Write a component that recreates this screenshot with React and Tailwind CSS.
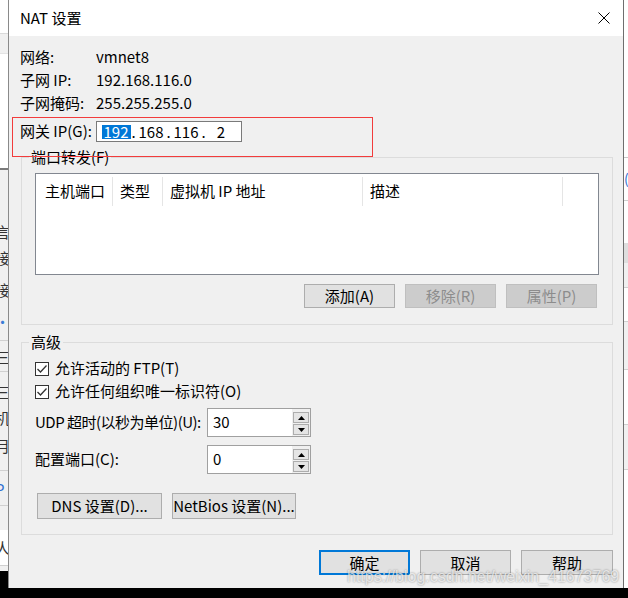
import React from "react";

const leftRows = [
  { h: 50 },
  { h: 24, ch: "言" },
  { h: 28, ch: "接" },
  { h: 36, ch: "接" },
  { h: 28, ch: "·", cls: "text-[#3a7bd5]" },
  { h: 5, line: true },
  { h: 31, ch: "三", line: true },
  { h: 40, ch: "三" },
  { h: 12, ch: "机" },
  { h: 44, ch: "月" },
  { h: 3, line: true },
  { h: 35, ch: "P", cls: "text-[#2f6fd0]", line: true },
  { h: 24 },
  { h: 36, ch: "人", cls: "bg-white", line: true },
];

function LeftStrip() {
  return (
    <div className="flex h-[571px] w-[8px] shrink-0 flex-col overflow-hidden bg-[#f0f0f0] text-[15px] text-[#333]">
      <div className="h-[33px] bg-white" />
      <div className="h-[20px] border-t border-[#dadada] bg-[#f0f0f0]" />
      <div className="h-[115px] border-t border-[#e3e3e3] bg-white" />
      <div className="h-[2px] bg-[#7a7a7a]" />
      {leftRows.map((r, i) => (
        <div
          key={i}
          className={`-ml-[5px] whitespace-nowrap ${r.line ? "border-b border-[#d0d0d0]" : ""} ${r.cls || ""}`}
          style={{ height: r.h, lineHeight: r.h + "px" }}
        >
          {r.ch || ""}
        </div>
      ))}
    </div>
  );
}

function RightStrip() {
  return (
    <div className="flex h-[588px] w-[4px] shrink-0 flex-col overflow-hidden bg-[#f0f0f0]">
      <div className="h-[157px] bg-white" />
      <div className="h-[43px] border-t border-[#c8c8c8] bg-white text-[14px] leading-[40px] text-[#2f6fd0]">(</div>
      <div className="h-[43px] border-t border-[#d0d0d0] bg-white" />
      <div className="h-[20px] bg-[#dedede]" />
      <div className="h-[25px] border-b border-[#d0d0d0]" />
      <div className="h-[34px] border-b border-[#d0d0d0] bg-white" />
      <div className="h-[48px] border-b border-[#d0d0d0]" />
      <div className="h-[55px] border-b border-[#d0d0d0] bg-white" />
      <div className="h-[45px] border-b border-[#d0d0d0]" />
      <div className="flex-1 bg-white" />
    </div>
  );
}

function WinButton({ children, className = "", disabled = false, primary = false }) {
  let tone = "border border-[#adadad] bg-[#e1e1e1] text-black";
  if (disabled) tone = "border border-[#bfbfbf] bg-[#cccccc] text-[#8c8c8c]";
  if (primary) tone = "border-2 border-[#0078d7] bg-[#e1e1e1] text-black";
  return (
    <div className={`flex items-center justify-center leading-[18px] ${tone} ${className}`}>
      {children}
    </div>
  );
}

function CheckBox() {
  return (
    <svg width="14" height="14" viewBox="0 0 14 14" className="shrink-0">
      <rect x="0.5" y="0.5" width="13" height="13" fill="#fff" stroke="#333" />
      <polyline points="2.5,7 5.5,10 11.5,3.5" fill="none" stroke="#333" strokeWidth="1.3" />
    </svg>
  );
}

function SpinBox({ value }) {
  return (
    <div className="flex h-[29px] w-[104px] border border-[#a0a0a0] bg-white">
      <div className="flex-1 pl-[5px] pt-[4px] leading-[18px]">{value}</div>
      <div className="flex w-[18px] flex-col gap-[1px] bg-[#f0f0f0] px-[1px] pt-[3px]">
        <div className="flex h-[11px] items-center justify-center border border-[#adadad] bg-[#e5e5e5]">
          <svg width="7" height="4" viewBox="0 0 7 4">
            <polygon points="3.5,0 7,4 0,4" fill="#000" />
          </svg>
        </div>
        <div className="flex h-[11px] items-center justify-center border border-[#adadad] bg-[#e5e5e5]">
          <svg width="7" height="4" viewBox="0 0 7 4">
            <polygon points="0,0 7,0 3.5,4" fill="#000" />
          </svg>
        </div>
      </div>
    </div>
  );
}

function InfoRow({ label, value }) {
  return (
    <div className="flex h-[23px] items-center">
      <span className="-ml-px w-[76px]">{label}</span>
      <span>{value}</span>
    </div>
  );
}

function Dialog() {
  const cols = [
    { w: "w-[77px] pl-[9px]", t: "主机端口" },
    { w: "w-[50px] pl-[7px]", t: "类型" },
    { w: "w-[200px] pl-[7px]", t: "虚拟机 IP 地址" },
    { w: "w-[200px] pl-[7px]", t: "描述" },
  ];

  return (
    <div className="flex h-[588px] w-[616px] shrink-0 flex-col border-x border-l-[#8a8a8a] border-r-[#6e6e6e] bg-[#f0f0f0]">
      {/* 标题栏 */}
      <div className="flex h-[36px] items-center justify-between bg-white pl-[11px] pr-[13px]">
        <span className="leading-[20px]">NAT 设置</span>
        <svg width="12" height="12" viewBox="0 0 12 12">
          <path d="M0.5 0.5 L11.5 11.5 M11.5 0.5 L0.5 11.5" stroke="#000" strokeWidth="1" />
        </svg>
      </div>

      <div className="flex flex-1 flex-col pl-[12px] pr-[10px] pt-[10px]">
        <InfoRow label="网络:" value="vmnet8" />
        <InfoRow label="子网 IP:" value="192.168.116.0" />
        <InfoRow label="子网掩码:" value="255.255.255.0" />

        <div className="mt-[6px] flex h-[21px] items-center">
          <span className="-ml-px w-[76px]">网关 IP(G):</span>
          <div className="flex h-[21px] w-[146px] items-center border border-[#7a7a7a] bg-white pl-[5px] leading-[14px]">
            <span className="flex w-[28px] justify-center">
              <span className="bg-[#0078d7] px-[2px] text-white">192</span>
            </span>
            <span className="w-[7px] text-center">.</span>
            <span className="w-[28px] text-center">168</span>
            <span className="w-[7px] text-center">.</span>
            <span className="w-[28px] text-center">116</span>
            <span className="w-[7px] text-center">.</span>
            <span className="w-[28px] text-center">2</span>
          </div>
        </div>

        {/* 端口转发 */}
        <fieldset className="mt-[6px] border border-[#dcdcdc] px-[13px] pb-[16px]">
          <legend className="-ml-[6px] px-[2px] leading-[18px]">端口转发(F)</legend>
          <div className="mt-[7px] h-[102px] border border-[#828790] bg-white">
            <div className="flex h-[32px] items-center pt-[3px]">
              {cols.map((c) => (
                <div key={c.t} className={`flex h-full items-center border-r border-[#e5e5e5] ${c.w}`}>
                  {c.t}
                </div>
              ))}
            </div>
          </div>
          <div className="mt-[9px] flex justify-end gap-[10px] pr-[2px]">
            <WinButton className="h-[24px] w-[91px]">添加(A)</WinButton>
            <WinButton className="h-[24px] w-[91px]" disabled>
              移除(R)
            </WinButton>
            <WinButton className="h-[24px] w-[91px]" disabled>
              属性(P)
            </WinButton>
          </div>
        </fieldset>

        {/* 高级 */}
        <fieldset className="mt-[8px] border border-[#dcdcdc] pb-[15px] pl-[13px]">
          <legend className="-ml-[6px] px-[2px] leading-[18px]">高级</legend>
          <div className="mt-[6px] flex h-[23px] items-center gap-[6px]">
            <CheckBox />
            <span>允许活动的 FTP(T)</span>
          </div>
          <div className="flex h-[23px] items-center gap-[6px]">
            <CheckBox />
            <span>允许任何组织唯一标识符(O)</span>
          </div>
          <div className="mt-[5px] flex h-[29px] items-center">
            <span className="w-[172px] whitespace-nowrap tracking-[-0.5px]">UDP 超时(以秒为单位)(U):</span>
            <SpinBox value="30" />
          </div>
          <div className="mt-[8px] flex h-[29px] items-center">
            <span className="w-[172px]">配置端口(C):</span>
            <SpinBox value="0" />
          </div>
          <div className="ml-[2px] mt-[19px] flex gap-[10px]">
            <WinButton className="h-[26px] w-[125px]">DNS 设置(D)...</WinButton>
            <WinButton className="h-[26px] w-[124px]">NetBios 设置(N)...</WinButton>
          </div>
        </fieldset>

        <div className="mt-[15px] flex justify-end gap-[10px]">
          <WinButton className="h-[25px] w-[91px]" primary>
            确定
          </WinButton>
          <WinButton className="h-[25px] w-[91px]">取消</WinButton>
          <WinButton className="h-[25px] w-[92px]">帮助</WinButton>
        </div>
      </div>
    </div>
  );
}

export default function App() {
  return (
    <div className="relative flex h-[598px] w-[628px] items-start overflow-hidden bg-black font-['Noto_Sans_CJK_SC','Noto_Sans',sans-serif] text-[15px] text-black">
      <LeftStrip />
      <Dialog />
      <RightStrip />

      {/* 截图标注 */}
      <div className="pointer-events-none absolute left-[12px] top-[117px] h-[40px] w-[361px] border border-[#f23c3c]" />

      {/* 水印 */}
      <div className="pointer-events-none absolute left-[347px] top-[568px] whitespace-nowrap font-['Liberation_Sans',sans-serif] text-[16px] leading-[18px] text-white/70 [text-shadow:0_0_2px_rgba(0,0,0,0.45)]">
        https://blog.csdn.net/weixin_41673769
      </div>
    </div>
  );
}
